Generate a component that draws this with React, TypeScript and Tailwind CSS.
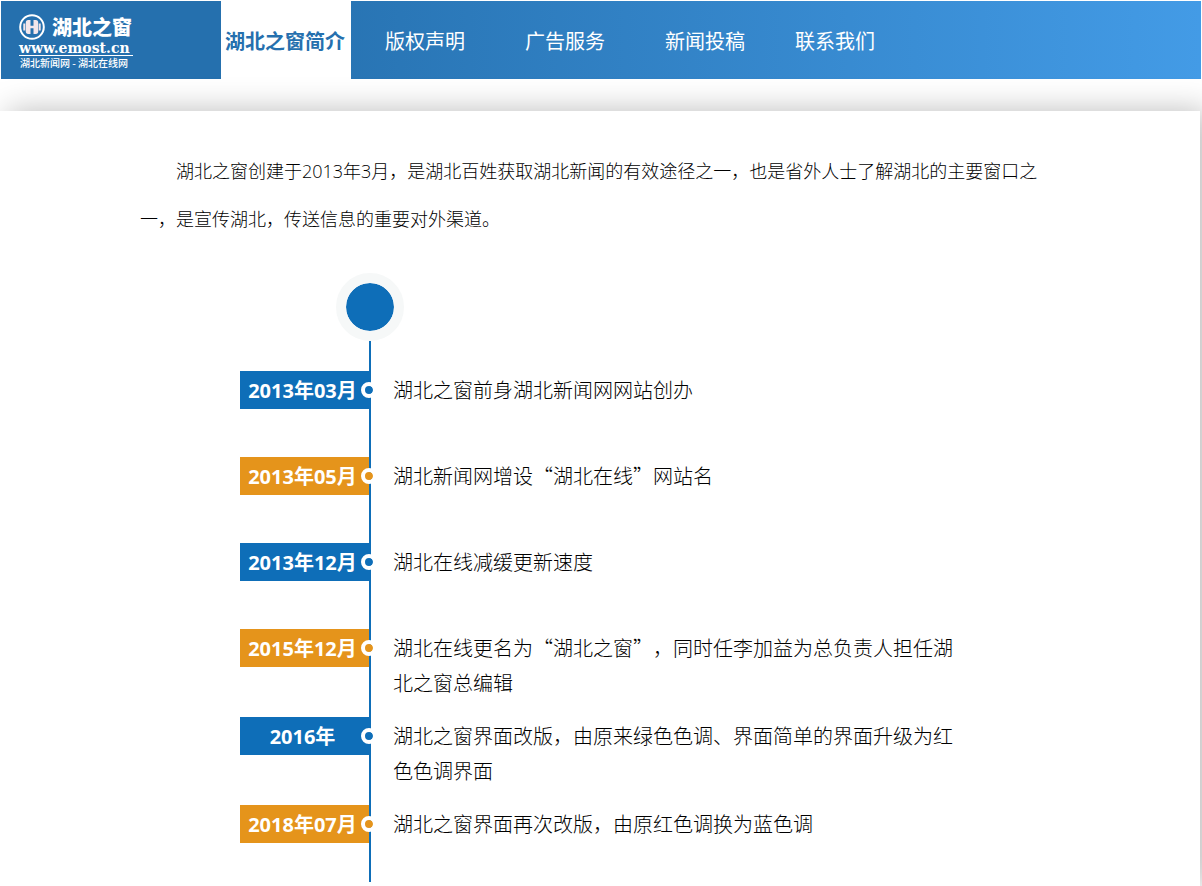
import clsx from 'clsx';

interface Milestone {
  date: string;
  text: string;
}

const navItems = ['版权声明', '广告服务', '新闻投稿', '联系我们'];

const milestones: Milestone[] = [
  { date: '2013年03月', text: '湖北之窗前身湖北新闻网网站创办' },
  { date: '2013年05月', text: '湖北新闻网增设“湖北在线”网站名' },
  { date: '2013年12月', text: '湖北在线减缓更新速度' },
  { date: '2015年12月', text: '湖北在线更名为“湖北之窗”，同时任李加益为总负责人担任湖北之窗总编辑' },
  { date: '2016年', text: '湖北之窗界面改版，由原来绿色色调、界面简单的界面升级为红色色调界面' },
  { date: '2018年07月', text: '湖北之窗界面再次改版，由原红色调换为蓝色调' },
];

function LogoMark() {
  return (
    <svg viewBox="0 0 26 26" className="h-[26px] w-[26px]" aria-hidden="true">
      <circle cx="13" cy="13" r="11.8" fill="none" stroke="#fff" strokeWidth="2" />
      <g fill="#f3e6ea">
        <path d="M11.500 6v14H9.200C7.500 20 6.800 19 6.800 17.500V8.500C6.800 7 7.500 6 9.200 6z" />
        <path d="M14.500 6v14h2.300c1.700 0 2.400-1 2.400-2.500V8.500C19.200 7 18.500 6 16.800 6z" />
        <path d="M4.300 9.500h2v7h-2zM19.700 9.500h2v7h-2zM11 11.800h4v2.400h-4z" />
      </g>
    </svg>
  );
}

function Header() {
  return (
    <header className="m-px flex h-[78px] bg-linear-to-r from-[#2570ae] from-20% to-[#439be6]">
      <a href="#" className="block w-[220px] shrink-0 bg-[#2570ae] pt-3 pl-[18px] text-white">
        <span className="flex h-7 items-center gap-[7px]">
          <LogoMark />
          <span className="text-[20px] leading-7 font-black">湖北之窗</span>
        </span>
        <span className="block w-[114px] border-b border-white font-['DejaVu_Serif',serif] text-[14px] leading-[14px] font-bold">
          www.emost.cn
        </span>
        <span className="block pl-px text-[10px] leading-[14px] font-medium">湖北新闻网 - 湖北在线网</span>
      </a>
      <nav className="flex text-[20px] leading-[80px] whitespace-nowrap text-white">
        <a href="#" aria-current="page" className="mr-1 h-[78px] w-[130px] bg-white pr-0.5 text-center font-bold text-[#2570ae]">
          湖北之窗简介
        </a>
        {navItems.map((item) => (
          <a key={item} href="#" className="h-[78px] px-[30px] last:px-5">
            {item}
          </a>
        ))}
      </nav>
    </header>
  );
}

function Timeline() {
  return (
    <section className="ml-[100px]">
      <div className="ml-24 h-[68px] w-[68px] rounded-full border-10 border-[#f6f8f8] bg-[#0e6eb8] bg-clip-padding" />
      <div className="ml-[129px] h-[30px] border-l-2 border-[#0e6eb8]" />
      <ol>
        {milestones.map((item, index) => {
          const color = index % 2 === 0 ? 'bg-[#0e6eb8]' : 'bg-[#e5941b]';
          return (
            <li key={item.date} className="flex min-h-[86px] last:min-h-[77px]">
              <div
                className={clsx(
                  "relative h-[38px] w-[129px] shrink-0 pr-1 text-center font-['Open_Sans','Noto_Sans_CJK_SC',sans-serif] text-[20px] leading-[40px] font-bold text-white",
                  color,
                )}
              >
                {item.date}
                <span className={clsx('absolute top-[11px] -right-2 h-4 w-4 rounded-full border-4 border-white bg-clip-padding', color)} />
              </div>
              <p className="border-l-2 border-[#0e6eb8] pt-px pb-[17px] pl-[22px] text-[20px] leading-[35px] font-light">
                <span className="block max-w-[560px]">{item.text}</span>
              </p>
            </li>
          );
        })}
      </ol>
    </section>
  );
}

export default function App() {
  return (
    <div
      lang="zh-CN"
      className="flex min-h-screen flex-col overflow-hidden bg-white font-['Noto_Sans_CJK_SC',sans-serif] text-black [text-spacing-trim:space-all]"
    >
      <Header />
      <main className="mt-[31px] mr-0.5 flex-1 bg-white pt-9 pl-[140px] shadow-[8px_0_30px_rgba(0,0,0,0.27)]">
        <div className="max-w-[900px]">
          <p className="mb-[30px] indent-9 font-['Open_Sans','Noto_Sans_CJK_SC',sans-serif] text-[18px] leading-12 font-light">
            湖北之窗创建于2013年3月，是湖北百姓获取湖北新闻的有效途径之一，也是省外人士了解湖北的主要窗口之一，是宣传湖北，传送信息的重要对外渠道。
          </p>
          <Timeline />
        </div>
      </main>
    </div>
  );
}
